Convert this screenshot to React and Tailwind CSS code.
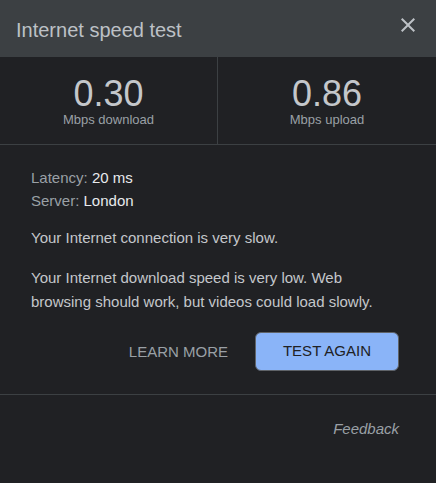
export default function App() {
  return (
    <div className="h-[483px] w-full bg-[#202124] font-['Liberation_Sans',Arial,sans-serif] text-[15px] text-[#bdc1c6]">
      {/* Title bar */}
      <div className="flex h-[57px] items-start justify-between bg-[#3c4043] pl-4 pr-4">
        <h1 className="pt-4 text-[20px] leading-[28px] font-normal text-[#bdc1c6]">Internet speed test</h1>
        <button className="mt-[13px] text-[#bdc1c6]" aria-label="Close">
          <svg width="24" height="24" viewBox="0 0 24 24" fill="currentColor">
            <path d="M19 6.41L17.59 5 12 10.59 6.41 5 5 6.41 10.59 12 5 17.59 6.41 19 12 13.41 17.59 19 19 17.59 13.41 12z" />
          </svg>
        </button>
      </div>

      {/* Results */}
      <div className="grid grid-cols-2 border-b border-[#3c4043]">
        <div className="flex flex-col items-center border-r border-[#3c4043] pt-[17px] pb-[18px]">
          <span className="text-[36px] leading-[39px] text-[#c4c7cb]">0.30</span>
          <span className="text-[13px] leading-[13px] text-[#9aa0a6]">Mbps download</span>
        </div>
        <div className="flex flex-col items-center pt-[17px] pb-[18px]">
          <span className="text-[36px] leading-[39px] text-[#c4c7cb]">0.86</span>
          <span className="text-[13px] leading-[13px] text-[#9aa0a6]">Mbps upload</span>
        </div>
      </div>

      {/* Details */}
      <div className="pl-[31px] pr-[37px] pt-[21px]">
        <div className="leading-[23px]">
          <div>
            <span className="text-[#9aa0a6]">Latency: </span>
            <span className="text-[#e8eaed]">20 ms</span>
          </div>
          <div>
            <span className="text-[#9aa0a6]">Server: </span>
            <span className="text-[#e8eaed]">London</span>
          </div>
        </div>
        <p className="mt-[14px] leading-6 text-[#c4c7cb]">Your Internet connection is very slow.</p>
        <p className="mt-4 leading-6 text-[#c4c7cb]">
          Your Internet download speed is very low. Web browsing should work, but videos could load slowly.
        </p>
        <div className="mt-[18px] flex items-center justify-end gap-[11px]">
          <button className="px-4 leading-[39px] text-[#9aa0a6]">LEARN MORE</button>
          <button className="h-[39px] w-[144px] rounded-md border border-[#5f6368] bg-[#8ab4f8] text-[#202124]">
            TEST AGAIN
          </button>
        </div>
      </div>

      <div className="mt-[23px] border-t border-[#3c4043] pr-[37px] pt-[22px] text-right">
        <a className="italic leading-6 text-[#9aa0a6]">Feedback</a>
      </div>
    </div>
  );
}
